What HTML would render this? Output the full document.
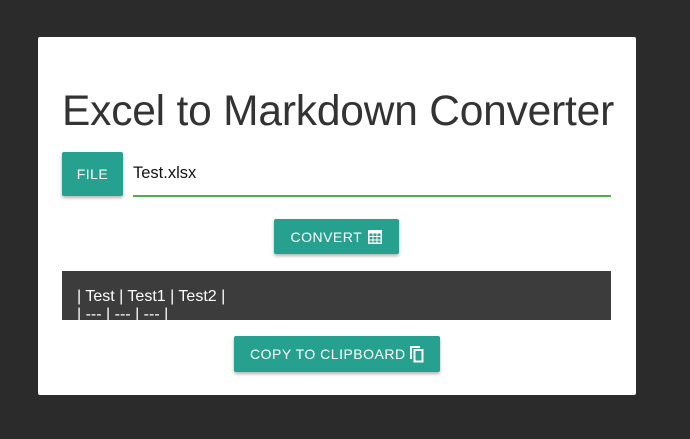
<!DOCTYPE html>
<html><head><style>
body{margin:0;width:690px;height:439px;background:#2b2b2b;font-family:"Liberation Sans",sans-serif;position:relative;overflow:hidden}
.card{position:absolute;left:38px;top:37px;width:598px;height:358px;background:#fff;border-radius:2px}
.abs{position:absolute}
h1{position:absolute;left:24px;top:51px;margin:0;font-weight:400;font-size:42.5px;color:#333;letter-spacing:-0.2px;white-space:nowrap}
.btn{position:absolute;background:#26a08f;color:#fff;font-size:14px;letter-spacing:.5px;display:flex;align-items:center;justify-content:center;border-radius:2px;box-shadow:0 2px 3px rgba(0,0,0,.3)}
</style></head><body>
<div class="card">
<h1>Excel to Markdown Converter</h1>
<div class="btn" style="left:24px;top:115px;width:61px;height:44px;">FILE</div>
<div class="abs" style="left:95px;top:127px;font-size:16.5px;color:#111">Test.xlsx</div>
<div class="abs" style="left:95px;top:158px;width:478px;height:2px;background:#4caf50"></div>
<div class="btn" style="left:236px;top:182px;width:125px;height:35px;">CONVERT&nbsp;<svg width="16" height="16" viewBox="0 0 16 16"><rect x="1" y="1" width="14" height="14" fill="#fff"/><g fill="#26a08f"><rect x="2.5" y="4.5" width="3" height="2.5"/><rect x="6.5" y="4.5" width="3" height="2.5"/><rect x="10.5" y="4.5" width="3" height="2.5"/><rect x="2.5" y="8" width="3" height="2.5"/><rect x="6.5" y="8" width="3" height="2.5"/><rect x="10.5" y="8" width="3" height="2.5"/><rect x="2.5" y="11.5" width="3" height="2"/><rect x="6.5" y="11.5" width="3" height="2"/><rect x="10.5" y="11.5" width="3" height="2"/></g></svg></div>
<div class="abs" style="left:24px;top:234px;width:549px;height:49px;background:#3c3c3c;overflow:hidden;color:#fff;font-size:16px;line-height:18px">
<div style="padding:17px 0 0 15px">| Test | Test1 | Test2 |<br>| --- | --- | --- |</div></div>
<div class="btn" style="left:196px;top:299px;width:206px;height:36px;">COPY TO CLIPBOARD&nbsp;<svg width="14" height="17" viewBox="0 0 14 17"><path d="M1 13V1h9" fill="none" stroke="#fff" stroke-width="2"/><rect x="4.5" y="4" width="8" height="11.5" fill="none" stroke="#fff" stroke-width="2"/></svg></div>
</div>
</body></html>
